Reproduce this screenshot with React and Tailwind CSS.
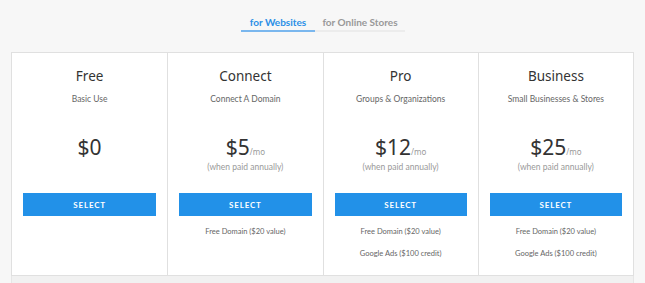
import { useState } from "react"

const plans = [
  { name: "Free", sub: "Basic Use", price: "$0", monthly: false, features: [] },
  { name: "Connect", sub: "Connect A Domain", price: "$5", monthly: true, features: ["Free Domain ($20 value)"] },
  {
    name: "Pro",
    sub: "Groups & Organizations",
    price: "$12",
    monthly: true,
    features: ["Free Domain ($20 value)", "Google Ads ($100 credit)"],
  },
  {
    name: "Business",
    sub: "Small Businesses & Stores",
    price: "$25",
    monthly: true,
    features: ["Free Domain ($20 value)", "Google Ads ($100 credit)"],
  },
]

const App = () => {
  const [tab, setTab] = useState("websites")

  return (
    <div className="h-screen bg-[#f7f7f7] font-['Lato',sans-serif] overflow-hidden">
      {/* Tabs */}
      <div className="flex justify-center pt-[13px] pl-[1px]">
        <div className="flex">
          <button
            onClick={() => setTab("websites")}
            className={`w-[74px] h-[19px] text-[10px] font-bold border-b-2 leading-[14px] ${
              tab === "websites" ? "text-[#2b8fe6] border-[#7ab7ee]" : "text-[#999] border-[#e6e6e6]"
            }`}
          >
            for Websites
          </button>
          <button
            onClick={() => setTab("stores")}
            className={`w-[90px] h-[19px] text-[10px] font-bold border-b-2 leading-[14px] ${
              tab === "stores" ? "text-[#2b8fe6] border-[#7ab7ee]" : "text-[#999] border-[#ececec]"
            }`}
          >
            for Online Stores
          </button>
        </div>
      </div>

      {/* Plans */}
      <div className="mx-[11px] mt-[20px] border border-[#e0e0e0] bg-white grid grid-cols-4">
        {plans.map((p, i) => (
          <div
            key={p.name}
            className={`flex flex-col items-center px-[11px] pt-[13px] pb-[14px] ${i > 0 ? "border-l border-[#e0e0e0]" : ""}`}
          >
            <div className="h-[20px] text-[13.5px] leading-[20px] text-[#333] font-['Noto_Sans',sans-serif]">{p.name}</div>
            <div className="mt-[6px] h-[14px] text-[8.5px] leading-[14px] text-[#666]">{p.sub}</div>
            <div className="mt-[29px] h-[39px] flex flex-col items-center">
              <div className="h-[24px] leading-[24px] text-[#333] font-['Noto_Sans',sans-serif]">
                <span className="text-[21px]">{p.price}</span>
                {p.monthly && <span className="text-[8px] text-[#999]">/mo</span>}
              </div>
              {p.monthly && (
                <div className="mt-[1px] h-[14px] text-[8.5px] leading-[14px] text-[#999]">(when paid annually)</div>
              )}
            </div>
            <button className="mt-[19px] w-full h-[23px] bg-[#2291e8] text-white text-[8px] font-bold tracking-[0.8px]">
              SELECT
            </button>
            {p.features.map((f, j) => (
              <div key={f} className={`h-[14px] text-[7.5px] leading-[14px] text-[#666] ${j === 0 ? "mt-[9px]" : "mt-[8px]"}`}>
                {f}
              </div>
            ))}
            {p.features.length < 2 && <div className={p.features.length === 0 ? "h-[45px]" : "h-[22px]"} />}
          </div>
        ))}
      </div>
      <div className="mx-[11px] h-[20px] bg-[#f1f1f1] border-x border-[#e6e6e6]" />
    </div>
  )
}

export default App
